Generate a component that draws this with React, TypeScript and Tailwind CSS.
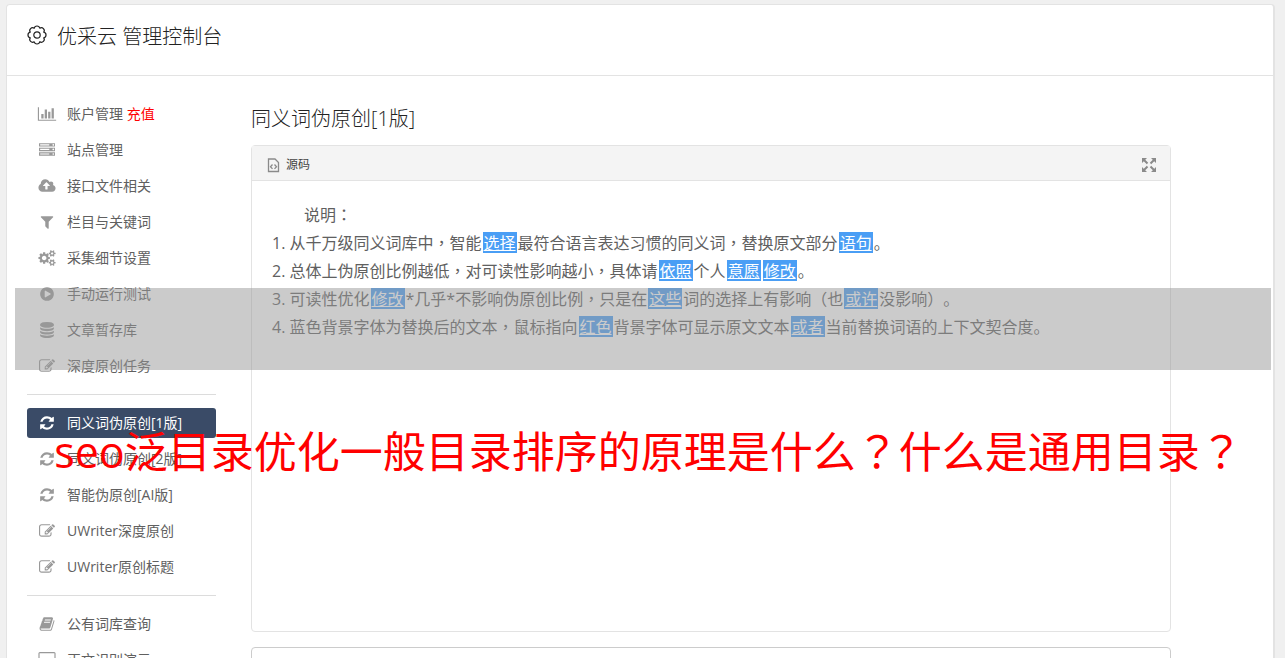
import React, { useState } from "react";
import clsx from "clsx";

type IconName =
  | "chart"
  | "server"
  | "upload"
  | "filter"
  | "cogs"
  | "play"
  | "database"
  | "edit"
  | "refresh"
  | "book"
  | "desktop";

const ICONS: Record<IconName, { box: string; d: string }> = {
  chart: {
    box: "0 0 2048 1792",
    d: "M640 896v512h-256v-512h256zm384-512v1024h-256v-1024h256zm1024 1152v128h-2048v-1536h128v1408h1920zm-640-896v768h-256v-768h256zm384-384v1152h-256v-1152h256z",
  },
  server: {
    box: "0 0 1792 1792",
    d: "M128 1408h1024v-128h-1024v128zm0-512h1024v-128h-1024v128zm1568 448q0-40-28-68t-68-28-68 28-28 68 28 68 68 28 68-28 28-68zm-1568-960h1024v-128h-1024v128zm1568 448q0-40-28-68t-68-28-68 28-28 68 28 68 68 28 68-28 28-68zm0-512q0-40-28-68t-68-28-68 28-28 68 28 68 68 28 68-28 28-68zm96 832v384h-1792v-384h1792zm0-512v384h-1792v-384h1792zm0-512v384h-1792v-384h1792z",
  },
  upload: {
    box: "0 0 1920 1792",
    d: "M1280 864q0-14-9-23l-352-352q-9-9-23-9t-23 9l-351 351q-10 12-10 24 0 14 9 23t23 9h224v352q0 13 9.500 22.500t22.500 9.500h192q13 0 22.500-9.500t9.500-22.500v-352h224q13 0 22.500-9.500t9.500-22.500zm640 288q0 159-112.500 271.500t-271.500 112.500h-1088q-185 0-316.500-131.500t-131.500-316.500q0-130 70-240t188-165q-2-30-2-43 0-212 150-362t362-150q156 0 285.500 87t188.500 231q71-62 166-62 106 0 181 75t75 181q0 76-41 138 130 31 213.500 135.500t83.500 238.500z",
  },
  filter: {
    box: "0 0 1792 1792",
    d: "M1595 295q17 41-14 70l-493 493v742q0 42-39 59-13 5-25 5-27 0-45-19l-256-256q-19-19-19-45v-486l-493-493q-31-29-14-70 17-39 59-39h1280q42 0 59 39z",
  },
  cogs: {
    box: "0 0 1920 1792",
    d: "M896 896q0-106-75-181t-181-75-181 75-75 181 75 181 181 75 181-75 75-181zm768 512q0-52-38-90t-90-38-90 38-38 90q0 53 37.500 90.500t90.500 37.500 90.500-37.500 37.500-90.500zm0-1024q0-52-38-90t-90-38-90 38-38 90q0 53 37.500 90.500t90.500 37.500 90.500-37.500 37.500-90.500zm-384 421v185q0 10-7 19.500t-16 10.500l-155 24q-11 35-32 76 34 48 90 115 7 11 7 20 0 12-7 19-23 30-82.500 89.500t-78.500 59.500q-11 0-21-7l-115-90q-37 19-77 31-11 108-23 155-7 24-30 24h-186q-11 0-20-7.500t-10-17.500l-23-153q-34-10-75-31l-118 89q-7 7-20 7-11 0-21-8-144-133-144-160 0-9 7-19 10-14 41-53t47-61q-23-44-35-82l-152-24q-10-1-17-9.500t-7-19.500v-185q0-10 7-19.500t16-10.500l155-24q11-35 32-76-34-48-90-115-7-11-7-20 0-12 7-20 22-30 82-89t79-59q11 0 21 7l115 90q34-18 77-32 11-108 23-154 7-24 30-24h186q11 0 20 7.500t10 17.500l23 153q34 10 75 31l118-89q8-7 20-7 11 0 21 8 144 133 144 160 0 8-7 19-12 16-42 54t-45 60q23 48 34 82l152 23q10 2 17 10.500t7 19.500zm640 533v140q0 16-149 31-12 27-30 52 51 113 51 138 0 4-4 7-122 71-124 71-8 0-46-47t-52-68q-20 2-30 2t-30-2q-14 21-52 68t-46 47q-2 0-124-71-4-3-4-7 0-25 51-138-18-25-30-52-149-15-149-31v-140q0-16 149-31 13-29 30-52-51-113-51-138 0-4 4-7 4-2 35-20t59-34 30-16q8 0 46 46.500t52 67.500q20-2 30-2t30 2q51-71 92-112l6-2q4 0 124 70 4 3 4 7 0 25-51 138 17 23 30 52 149 15 149 31zm0-1024v140q0 16-149 31-12 27-30 52 51 113 51 138 0 4-4 7-122 71-124 71-8 0-46-47t-52-68q-20 2-30 2t-30-2q-14 21-52 68t-46 47q-2 0-124-71-4-3-4-7 0-25 51-138-18-25-30-52-149-15-149-31v-140q0-16 149-31 13-29 30-52-51-113-51-138 0-4 4-7 4-2 35-20t59-34 30-16q8 0 46 46.500t52 67.500q20-2 30-2t30 2q51-71 92-112l6-2q4 0 124 70 4 3 4 7 0 25-51 138 17 23 30 52 149 15 149 31z",
  },
  play: {
    box: "0 0 1792 1792",
    d: "M896 128q209 0 385.500 103t279.500 279.500 103 385.500-103 385.500-279.500 279.500-385.500 103-385.500-103-279.500-279.500-103-385.500 103-385.500 279.500-279.500 385.500-103zm384 823q32-18 32-55t-32-55l-544-320q-31-19-64-1-32 19-32 56v640q0 37 32 56 16 8 32 8 17 0 32-9z",
  },
  database: {
    box: "0 0 1792 1792",
    d: "M896 768q237 0 443-43t325-127v170q0 69-103 128t-280 93.500-385 34.500-385-34.500-280-93.500-103-128v-170q119 84 325 127t443 43zm0 768q237 0 443-43t325-127v170q0 69-103 128t-280 93.500-385 34.500-385-34.500-280-93.500-103-128v-170q119 84 325 127t443 43zm0-384q237 0 443-43t325-127v170q0 69-103 128t-280 93.500-385 34.500-385-34.500-280-93.500-103-128v-170q119 84 325 127t443 43zm0-1152q208 0 385 34.500t280 93.500 103 128v128q0 69-103 128t-280 93.500-385 34.500-385-34.500-280-93.500-103-128v-128q0-69 103-128t280-93.500 385-34.500z",
  },
  edit: {
    box: "0 0 1792 1792",
    d: "M888 1184l116-116-152-152-116 116v56h96v96h56zm440-720q-16-16-33 1l-350 350q-17 17-1 33t33-1l350-350q17-17 1-33zm80 594v190q0 119-84.500 203.500t-203.500 84.500h-832q-119 0-203.500-84.500t-84.500-203.500v-832q0-119 84.500-203.500t203.500-84.500h832q63 0 117 25 15 7 18 23 3 17-9 29l-49 49q-14 14-32 8-23-6-45-6h-832q-66 0-113 47t-47 113v832q0 66 47 113t113 47h832q66 0 113-47t47-113v-126q0-13 9-22l64-64q15-15 35-7t20 29zm-96-738l288 288-672 672h-288v-288zm444 132l-92 92-288-288 92-92q28-28 68-28t68 28l152 152q28 28 28 68t-28 68z",
  },
  refresh: {
    box: "0 0 1792 1792",
    d: "M1639 1056q0 5-1 7-64 268-268 434.500t-478 166.500q-146 0-282.500-55t-243.500-157l-129 129q-19 19-45 19t-45-19-19-45v-448q0-26 19-45t45-19h448q26 0 45 19t19 45-19 45l-137 137q71 66 161 102t187 36q134 0 250-65t186-179q11-17 53-117 8-23 30-23h192q13 0 22.500 9.500t9.500 22.500zm25-800v448q0 26-19 45t-45 19h-448q-26 0-45-19t-19-45 19-45l138-138q-148-137-349-137-134 0-250 65t-186 179q-11 17-53 117-8 23-30 23h-199q-13 0-22.500-9.500t-9.500-22.500v-7q65-268 270-434.500t480-166.500q146 0 284 55.500t245 156.500l130-129q19-19 45-19t45 19 19 45z",
  },
  book: {
    box: "0 0 1792 1792",
    d: "M1703 478q40 57 18 129l-275 906q-19 64-76.500 107.500t-122.500 43.500h-923q-77 0-148.500-53.500t-99.500-131.500q-24-67-2-127 0-4 3-27t4-37q1-8-3-21.500t-3-19.500q2-11 8-21t16.500-23.500 16.500-23.500q23-38 45-91.500t30-91.500q3-10 .5-30t-.5-28q3-11 17-28t17-23q21-36 42-92t25-90q1-9-2.500-32t.5-28q4-13 22-30.500t22-22.500q19-26 42.500-84.500t27.500-96.500q1-8-3-25.500t-2-26.500q2-8 9-18t18-23 17-21q8-12 16.500-30.500t15-35 16-36 19.500-32 26.500-23.500 36-11.500 47.500 5.500l-1 3q38-9 51-9h761q74 0 114 56t18 130l-274 906q-36 119-71.500 153.500t-128.500 34.500h-869q-27 0-38 15-11 16-1 43 24 70 144 70h923q29 0 56-15.500t35-41.500l300-987q7-22 5-57 38 15 59 43zm-1064 2q-4 13 2 22.500t20 9.500h608q13 0 25.500-9.500t16.500-22.500l21-64q4-13-2-22.500t-20-9.500h-608q-13 0-25.500 9.500t-16.500 22.500zm-83 256q-4 13 2 22.500t20 9.500h608q13 0 25.500-9.500t16.500-22.500l21-64q4-13-2-22.500t-20-9.500h-608q-13 0-25.500 9.500t-16.500 22.500z",
  },
  desktop: {
    box: "-64 0 1920 1792",
    d: "M1728 992v-832q0-13-9.500-22.500t-22.500-9.500h-1600q-13 0-22.500 9.500t-9.500 22.500v832q0 13 9.500 22.500t22.500 9.500h1600q13 0 22.500-9.500t9.500-22.500zm128-832v1088q0 66-47 113t-113 47h-544q0 37 16 77.500t32 71 16 43.500q0 26-19 45t-45 19h-512q-26 0-45-19t-19-45q0-14 16-44t32-70 16-78h-544q-66 0-113-47t-47-113v-1088q0-66 47-113t113-47h1600q66 0 113 47t47 113z",
  },
};

function Icon({ name }: { name: IconName }) {
  return (
    <svg
      viewBox={ICONS[name].box}
      className="h-4 w-5 shrink-0 fill-current"
      aria-hidden="true"
    >
      <path d={ICONS[name].d} />
    </svg>
  );
}

type MenuItem = { icon: IconName; label: string; extra?: string };

const MENU: MenuItem[][] = [
  [
    { icon: "chart", label: "账户管理", extra: "充值" },
    { icon: "server", label: "站点管理" },
    { icon: "upload", label: "接口文件相关" },
    { icon: "filter", label: "栏目与关键词" },
    { icon: "cogs", label: "采集细节设置" },
    { icon: "play", label: "手动运行测试" },
    { icon: "database", label: "文章暂存库" },
    { icon: "edit", label: "深度原创任务" },
  ],
  [
    { icon: "refresh", label: "同义词伪原创[1版]" },
    { icon: "refresh", label: "同义词伪原创[2版]" },
    { icon: "refresh", label: "智能伪原创[AI版]" },
    { icon: "edit", label: "UWriter深度原创" },
    { icon: "edit", label: "UWriter原创标题" },
  ],
  [
    { icon: "book", label: "公有词库查询" },
    { icon: "desktop", label: "正文识别演示" },
  ],
];

function Sidebar() {
  const [active, setActive] = useState("同义词伪原创[1版]");

  return (
    <nav className="w-[189px] shrink-0 text-sm">
      {MENU.map((group, i) => (
        <ul
          key={i}
          className={clsx(
            "flex flex-col gap-1.5",
            i > 0 && "mt-[13px] border-t border-[#dcdcdc] pt-[13px]",
          )}
        >
          {group.map((item) => (
            <li key={item.label}>
              <a
                href="#"
                onClick={() => setActive(item.label)}
                className={clsx(
                  "flex h-[30px] items-center gap-2.5 rounded-[3px] px-2.5 whitespace-nowrap",
                  active === item.label
                    ? "bg-[#3a4b67] text-white"
                    : "text-[#999]",
                )}
              >
                <Icon name={item.icon} />
                <span
                  className={clsx(active !== item.label && "text-[#606060]")}
                >
                  {item.label}
                  {item.extra && (
                    <span className="text-[#f00]"> {item.extra}</span>
                  )}
                </span>
              </a>
            </li>
          ))}
        </ul>
      ))}
    </nav>
  );
}

// Sets commas, colons and question marks in the middle of their square
function Zh({ children }: { children: string }) {
  return (
    <>
      {children.split(/([，：？])/).map((part, i) =>
        i % 2 === 1 ? (
          <span
            key={i}
            lang="zh-TW"
            className="font-['Open_Sans','Noto_Sans_CJK_TC',sans-serif]"
          >
            {part}
          </span>
        ) : (
          part
        ),
      )}
    </>
  );
}

// A word that was swapped for one of its synonyms
function Swap({ children }: { children: React.ReactNode }) {
  return (
    <span className="mx-px inline-block bg-[#4a9ef5] px-px pt-px leading-5 text-white underline">
      {children}
    </span>
  );
}

function SourceEditor() {
  return (
    <div className="rounded border border-[#e3e3e3]">
      <div className="flex h-[35px] items-center justify-between border-b border-[#e3e3e3] bg-[#f4f4f4] px-3.5 pt-[3px]">
        <button className="flex items-center gap-1.5 text-xs text-[#444]">
          <svg
            viewBox="0 0 14 16"
            className="h-4 w-3.5 fill-none stroke-[#8a8a8a]"
            aria-hidden="true"
          >
            <path d="M2.500 2h6.500l3.500 3.500v9h-10z" strokeWidth="1.300" />
            <path
              d="M6.500 7.500l-2 2.200 2 2.200M8.500 7.500l2 2.200-2 2.200"
              strokeWidth="1.300"
            />
          </svg>
          源码
        </button>
        <button aria-label="全屏">
          <svg
            viewBox="0 0 14 14"
            className="size-3.5 fill-[#8a8a8a] stroke-[#8a8a8a]"
            aria-hidden="true"
          >
            <path
              stroke="none"
              d="M0 0h5L0 5zM14 0v5L9 0zM0 14V9l5 5zM14 14H9l5-5z"
            />
            <path
              d="M2 2l3.500 3.500M12 2L8.500 5.500M2 12l3.500-3.500M12 12L8.500 8.500"
              strokeWidth="2"
            />
          </svg>
        </button>
      </div>
      <div className="min-h-[450px] px-5 pt-5 text-base leading-7 text-[#606060]">
        <p className="indent-8">
          <Zh>说明：</Zh>
        </p>
        <ol className="list-inside list-decimal">
          <li>
            <Zh>从千万级同义词库中，智能</Zh>
            <Swap>选择</Swap>
            <Zh>最符合语言表达习惯的同义词，替换原文部分</Zh>
            <Swap>语句</Swap>。
          </li>
          <li>
            <Zh>总体上伪原创比例越低，对可读性影响越小，具体请</Zh>
            <Swap>依照</Swap>个人
            <Swap>意愿</Swap>
            <Swap>修改</Swap>。
          </li>
          <li>
            可读性优化<Swap>修改</Swap>
            <Zh>*几乎*不影响伪原创比例，只是在</Zh>
            <Swap>这些</Swap>词的选择上有影响（也<Swap>或许</Swap>没影响）。
          </li>
          <li>
            <Zh>蓝色背景字体为替换后的文本，鼠标指向</Zh>
            <Swap>红色</Swap>
            背景字体可显示原文文本<Swap>或者</Swap>
            当前替换词语的上下文契合度。
          </li>
        </ol>
      </div>
    </div>
  );
}

function App() {
  return (
    <div className="relative h-screen overflow-hidden bg-[#f0f0f0] pt-1 pr-2.5 pl-1.5 font-['Open_Sans','Noto_Sans_CJK_SC',sans-serif] [text-spacing-trim:space-all]">
      <div className="min-h-full rounded border border-r-2 border-[#e3e3e3] bg-white">
        <header className="flex h-[71px] items-center gap-2.5 border-b border-[#e3e3e3] px-5 pb-1.5 text-[#222]">
          <svg
            viewBox="0 0 20 20"
            className="mb-1 size-5 fill-none stroke-current"
            aria-hidden="true"
          >
            <path
              strokeWidth="1.200"
              strokeLinejoin="round"
              d="M7.210 3.250A2.850 2.850 0 0 1 12.790 3.250A2.850 2.850 0 0 1 16.750 7.210A2.850 2.850 0 0 1 16.750 12.790A2.850 2.850 0 0 1 12.790 16.750A2.850 2.850 0 0 1 7.210 16.750A2.850 2.850 0 0 1 3.250 12.790A2.850 2.850 0 0 1 3.250 7.210A2.850 2.850 0 0 1 7.210 3.250z"
            />
            <circle cx="10" cy="10" r="3.200" strokeWidth="1.200" />
          </svg>
          <h1 className="text-xl font-light">优采云 管理控制台</h1>
        </header>
        <div className="flex gap-[35px] pt-[23px] pl-5">
          <Sidebar />
          <main className="min-w-0 flex-1">
            <h2 className="mt-1.5 text-xl leading-7 font-light text-[#222]">
              同义词伪原创[1版]
            </h2>
            <div className="mt-3 flex w-[90%] flex-col gap-[15px]">
              <SourceEditor />
              <textarea
                aria-label="原文"
                className="h-40 w-full resize-none rounded border border-[#ccc] p-3"
              />
            </div>
          </main>
        </div>
      </div>

      {/* Banner over the page */}
      <div className="absolute top-[288px] right-3.5 left-[15px] h-[82px] bg-[#979797]/50" />
      <p className="absolute inset-x-0 top-[422px] pl-3 text-center text-[43px] leading-[60px] whitespace-nowrap text-[#f00]">
        <Zh>seo泛目录优化一般目录排序的原理是什么？什么是通用目录？</Zh>
      </p>
    </div>
  );
}

export default App;
